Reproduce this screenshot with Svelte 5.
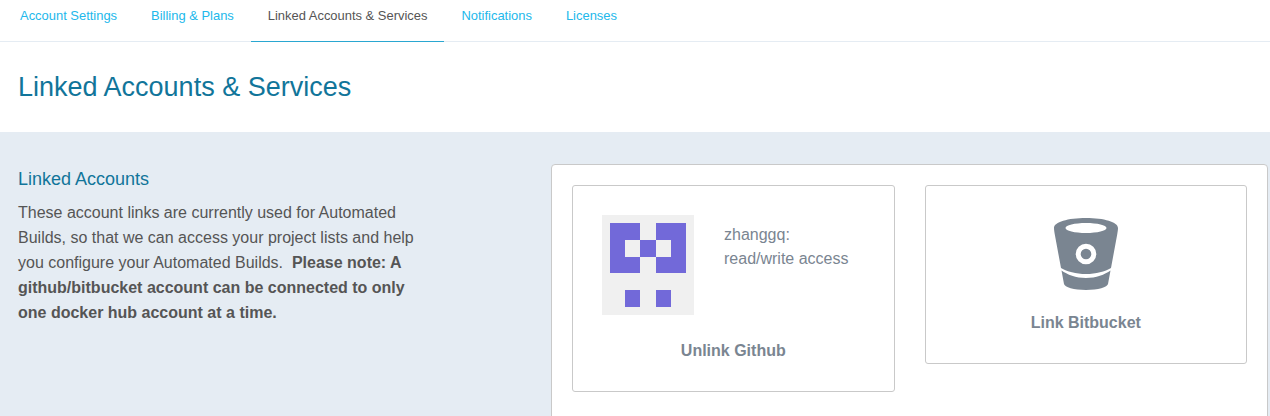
<script>
    const tabs = [
        { label: "Account Settings" },
        { label: "Billing & Plans" },
        { label: "Linked Accounts & Services", active: true },
        { label: "Notifications" },
        { label: "Licenses" },
    ];

    // identicon cells as [col, row]
    const cells = [
        [0, 0], [1, 0], [3, 0], [4, 0],
        [0, 1], [2, 1], [4, 1],
        [0, 2], [1, 2], [3, 2], [4, 2],
        [1, 4], [3, 4],
    ];
</script>

<nav class="tabs">
    {#each tabs as tab}
        <a href="#top" class="tab" class:active={tab.active}>{tab.label}</a>
    {/each}
</nav>

<header class="page-title">
    <h1>Linked Accounts &amp; Services</h1>
</header>

<main class="content">
    <section class="intro">
        <h2>Linked Accounts</h2>
        <p>
            These account links are currently used for Automated Builds, so that we can access your project lists and help you configure your Automated Builds.&nbsp;
            <strong>Please note: A github/bitbucket account can be connected to only one docker hub account at a time.</strong>
        </p>
    </section>

    <section class="panel">
        <div class="card github">
            <div class="profile">
                <svg class="avatar" viewBox="0 0 6 6" preserveAspectRatio="none" aria-hidden="true">
                    <rect width="6" height="6" fill="#f0f0f0" />
                    {#each cells as [col, row]}
                        <rect x={col + 0.5} y={row + 0.5} width="1" height="1" fill="#7269d9" shape-rendering="crispEdges" />
                    {/each}
                </svg>
                <div class="who">
                    <div>zhanggq:</div>
                    <div>read/write access</div>
                </div>
            </div>
            <div class="action">Unlink Github</div>
        </div>

        <div class="card bitbucket">
            <svg class="bucket" viewBox="0 0 64 72" aria-hidden="true">
                <path
                    fill-rule="evenodd"
                    d="M0 10C0 4 14 0 32 0s32 4 32 10c0 2-.4 4-.8 6.500L57 50c-6 3.500-15 6-25 6S13 53.500 7 50L.800 16.500C.400 14 0 12 0 10ZM11.500 10c0 2.800 9.200 5 20.500 5s20.500-2.200 20.500-5-9.200-5-20.500-5-20.500 2.200-20.500 5ZM32 25.700a10.300 10.300 0 1 0 0 20.600 10.300 10.300 0 0 0 0-20.600ZM32 30.700a5.300 5.300 0 1 1 0 10.600 5.300 5.300 0 0 1 0-10.600Z"
                    fill="#7a8591"
                />
                <path
                    d="M7.500 52.500C13 56.500 22 60 32 60s19-3.500 24.500-7.500L54 66c-.5 3-10 6-22 6s-21.500-3-22-6Z"
                    fill="#7a8591"
                />
            </svg>
            <div class="action">Link Bitbucket</div>
        </div>
    </section>
</main>

<style>
    :global(html), :global(body) {
        margin: 0;
        height: 416px;
        overflow: hidden;
        background: #fff;
    }

    .tabs {
        display: flex;
        height: 41px;
        padding-left: 3px;
        border-bottom: 1px solid #e5ecf3;
        font-family: "Liberation Sans", Arial, sans-serif;
        font-size: 12.95px;
    }

    .tab {
        display: flex;
        align-items: center;
        height: 42px;
        padding: 0 17px;
        box-sizing: border-box;
        padding-bottom: 11px;
        color: #22b8eb;
        text-decoration: none;
    }

    .tab.active {
        color: #555;
        border-bottom: 1px solid #2aa7d1;
    }

    .page-title {
        height: 90px;
        display: flex;
        align-items: center;
        padding-left: 18px;
        font-family: "Liberation Sans", Arial, sans-serif;
    }

    h1 {
        margin: 0;
        font-size: 27px;
        font-weight: 400;
        color: #11759a;
    }

    .content {
        display: flex;
        align-items: flex-start;
        height: 284px;
        background: #e5ecf3;
        font-family: "Liberation Sans", Arial, sans-serif;
    }

    .intro {
        width: 551px;
        flex-shrink: 0;
        box-sizing: border-box;
        padding: 36px 136px 0 18px;
    }

    h2 {
        margin: 0 0 9px;
        font-size: 18px;
        line-height: 23px;
        font-weight: 400;
        color: #11759a;
    }

    p {
        margin: 0;
        font-size: 16px;
        line-height: 25px;
        color: #555;
    }

    .panel {
        display: flex;
        align-items: flex-start;
        gap: 30px;
        width: 717px;
        height: 300px;
        margin-top: 32px;
        padding: 20px;
        box-sizing: border-box;
        flex-shrink: 0;
        background: #fff;
        border: 1px solid #c9c9c9;
        border-radius: 4px;
    }

    .card {
        width: 323px;
        box-sizing: border-box;
        border: 1px solid #c9c9c9;
        border-radius: 3px;
        background: #fff;
        color: #7a8591;
        text-align: center;
    }

    .github {
        height: 207px;
        padding: 29px 29px 0;
    }

    .bitbucket {
        height: 179px;
        padding-top: 32px;
    }

    .profile {
        display: flex;
        gap: 30px;
        text-align: left;
    }

    .avatar {
        display: block;
        width: 92px;
        height: 100px;
        flex-shrink: 0;
    }

    .who {
        padding-top: 8px;
        font-size: 16px;
        line-height: 24px;
    }

    .action {
        font-size: 16px;
        line-height: 20px;
        font-weight: 700;
    }

    .github .action {
        margin-top: 26px;
    }

    .bucket {
        display: block;
        width: 64px;
        height: 72px;
        margin: 0 auto;
    }

    .bitbucket .action {
        margin-top: 23px;
    }
</style>
